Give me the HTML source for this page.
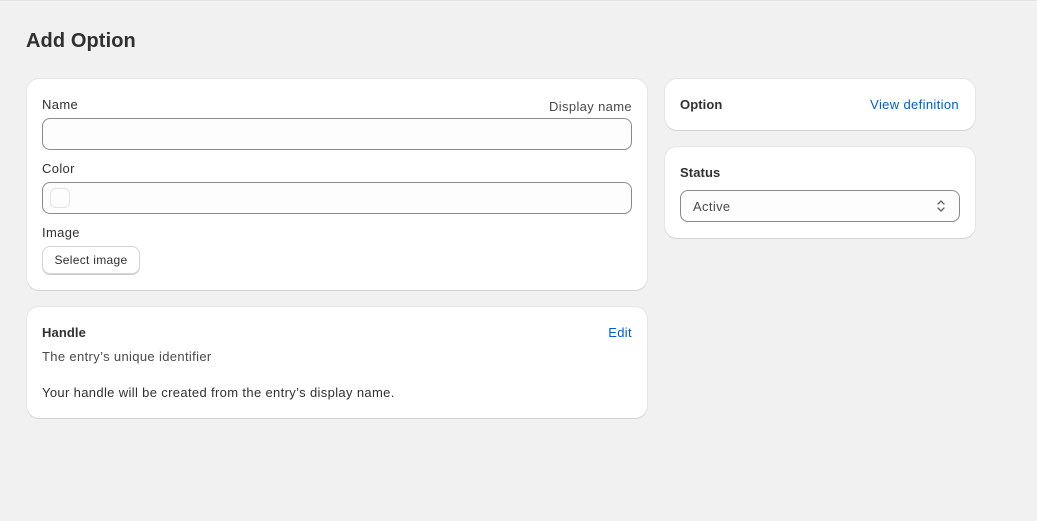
<!DOCTYPE html>
<html><head><style>
*{box-sizing:border-box;margin:0;padding:0}
body{width:1037px;height:521px;background:#f1f1f1;font-family:"Liberation Sans",sans-serif;color:#303030;font-size:13px;position:relative;overflow:hidden;border-top:1px solid #e3e3e3;letter-spacing:0.35px}
.a{position:absolute}
.card{position:absolute;background:#fff;border-radius:12px;box-shadow:0 1px 0 #d4d4d4,0 0 0 1px #e6e6e6}
.in{position:absolute;border:1px solid #8a8a8a;border-radius:8px;background:#fdfdfd}
.t{position:absolute;line-height:16px;white-space:nowrap}
.r{text-align:right}
.b{font-weight:bold;letter-spacing:0.1px}
.blue{color:#005bd3}
</style></head><body>
<div class="t b" style="left:26px;top:28px;font-size:20px;line-height:24px">Add Option</div>

<div class="card" style="left:27px;top:78px;width:620px;height:211px"></div>
<div class="t" style="left:42px;top:96px">Name</div>
<div class="t r" style="right:405px;top:98px;color:#4a4a4a">Display name</div>
<div class="in" style="left:42px;top:117px;width:590px;height:32px"></div>
<div class="t" style="left:42px;top:160px">Color</div>
<div class="in" style="left:42px;top:181px;width:590px;height:32px"></div>
<div class="a" style="left:50px;top:187px;width:20px;height:20px;border:1px solid #e3e3e3;border-radius:6px"></div>
<div class="t" style="left:42px;top:224px">Image</div>
<div class="a" style="left:42px;top:245px;width:98px;height:28px;border:1px solid #d4d4d4;border-radius:8px;box-shadow:0 1px 0 #ccc;font-size:12px;line-height:26px;text-align:center;letter-spacing:0.3px">Select image</div>

<div class="card" style="left:27px;top:306px;width:620px;height:111px"></div>
<div class="t b" style="left:42px;top:324px">Handle</div>
<div class="t blue r" style="right:405px;top:324px">Edit</div>
<div class="t" style="left:42px;top:348px;color:#4a4a4a">The entry’s unique identifier</div>
<div class="t" style="left:42px;top:384px">Your handle will be created from the entry’s display name.</div>

<div class="card" style="left:665px;top:78px;width:310px;height:51px"></div>
<div class="t b" style="left:680px;top:96px">Option</div>
<div class="t blue r" style="right:78px;top:96px">View definition</div>

<div class="card" style="left:665px;top:146px;width:310px;height:91px"></div>
<div class="t b" style="left:680px;top:164px">Status</div>
<div class="in" style="left:680px;top:189px;width:280px;height:32px"></div>
<div class="t" style="left:693px;top:198px;color:#4a4a4a">Active</div>
<svg class="a" style="left:935px;top:197px" width="12" height="16" viewBox="0 0 12 16"><path d="M3 6l3-3 3 3M3 10l3 3 3-3" fill="none" stroke="#616161" stroke-width="1.3" stroke-linecap="round" stroke-linejoin="round"/></svg>
</body></html>
